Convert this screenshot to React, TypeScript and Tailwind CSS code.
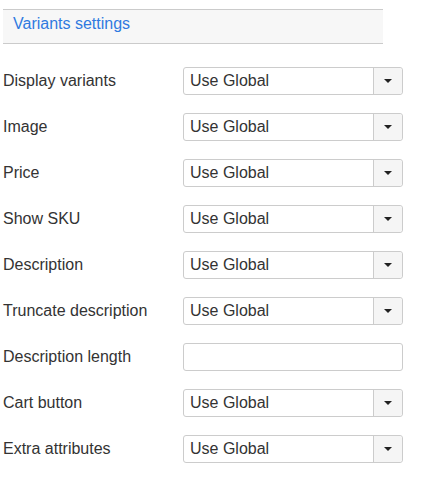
const rows: { label: string; kind: "select" | "input" }[] = [
  { label: "Display variants", kind: "select" },
  { label: "Image", kind: "select" },
  { label: "Price", kind: "select" },
  { label: "Show SKU", kind: "select" },
  { label: "Description", kind: "select" },
  { label: "Truncate description", kind: "select" },
  { label: "Description length", kind: "input" },
  { label: "Cart button", kind: "select" },
  { label: "Extra attributes", kind: "select" },
];

function FakeSelect() {
  return (
    <div className="flex h-[28px] w-[220px] rounded-[3px] border border-[#cccccc] bg-white">
      <div className="flex-1 px-[6px] text-[16px] leading-[26px] text-[#333333]">Use Global</div>
      <div className="flex w-[29px] items-center justify-center rounded-r-[3px] border-l border-[#cccccc] bg-[#f5f5f5]">
        <svg width="8" height="4" viewBox="0 0 8 4">
          <path d="M0 0h8L4 4z" fill="#222" />
        </svg>
      </div>
    </div>
  );
}

export default function App() {
  return (
    <div className="min-h-[480px] bg-white pt-[9px] font-['Liberation_Sans',Arial,sans-serif]">
      <div className="mx-[3px] h-[35px] w-[380px] border-y border-[#cbcbcb] bg-[#f7f7f7] pl-[10px] pt-[2px]">
        <span className="text-[16px] leading-[24px] text-[#2f7ae0]">Variants settings</span>
      </div>
      <div className="mt-[23px] flex flex-col gap-[18px] pl-[3px]">
        {rows.map((r) => (
          <div key={r.label} className="flex items-center">
            <div className="w-[180px] text-[16px] leading-[28px] text-[#333333]">{r.label}</div>
            {r.kind === "select" ? (
              <FakeSelect />
            ) : (
              <div className="h-[28px] w-[220px] rounded-[3px] border border-[#cccccc] bg-white" />
            )}
          </div>
        ))}
      </div>
    </div>
  );
}
